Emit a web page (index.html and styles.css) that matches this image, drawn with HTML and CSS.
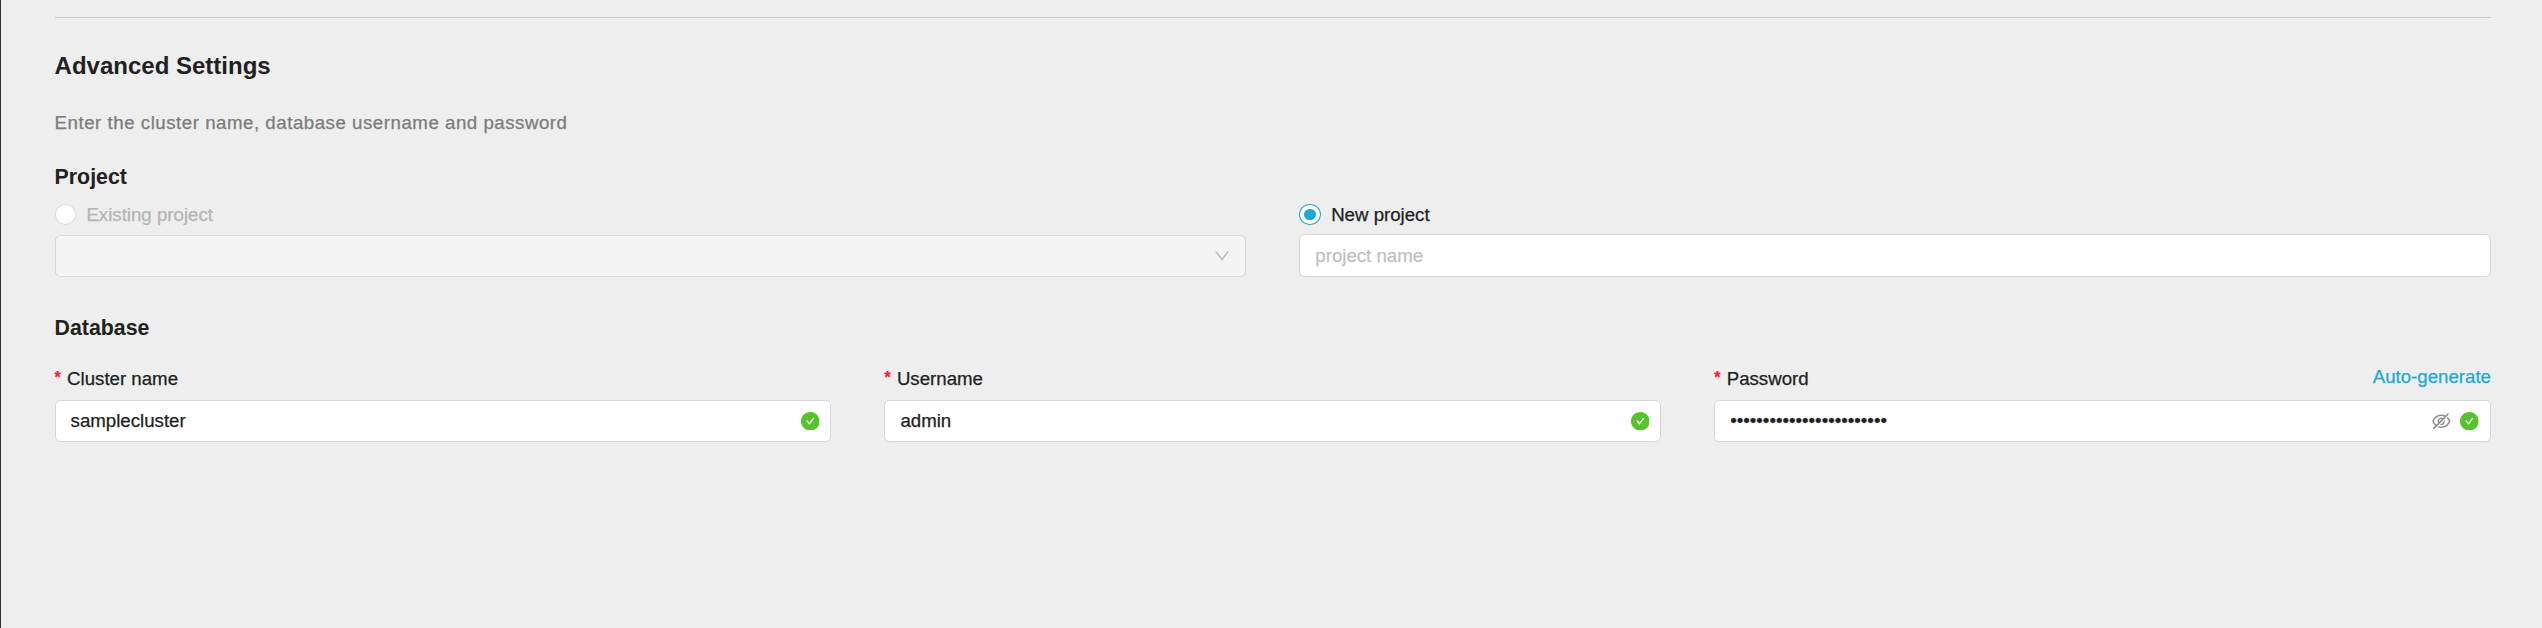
FILE: index.html
```
<!DOCTYPE html>
<html lang="en">
<head>
<meta charset="utf-8">
<title>Advanced Settings</title>
<link rel="stylesheet" href="styles.css">
</head>
<body>
<svg width="0" height="0" class="defs" aria-hidden="true">
  <symbol id="check" viewBox="64 64 896 896"><path d="M512 64C264.6 64 64 264.6 64 512s200.6 448 448 448 448-200.6 448-448S759.4 64 512 64zm193.5 301.7l-210.6 292a31.8 31.8 0 0 1-51.7 0L318.5 484.9c-3.8-5.3 0-12.7 6.5-12.7h46.9c10.2 0 19.9 4.9 25.9 13.3l71.2 98.8 157.2-218c6-8.3 15.6-13.3 25.9-13.3H699c6.5 0 10.3 7.4 6.5 12.7z"/></symbol>
</svg>
<main class="page">
  <hr class="divider">
  <h2 class="title">Advanced Settings</h2>
  <p class="description">Enter the cluster name, database username and password</p>

  <h3 class="section-title">Project</h3>
  <div class="columns project">
    <div class="option">
      <div class="radio-row disabled"><span class="radio"></span>Existing project</div>
      <div class="field select">
        <svg class="icon-down" viewBox="64 64 896 896"><path d="M884 256h-75c-5.1 0-9.9 2.5-12.9 6.6L512 654.2 227.9 262.6c-3-4.1-7.8-6.6-12.9-6.6h-75c-6.5 0-10.3 7.4-6.5 12.7l352.6 486.1c12.8 17.6 39 17.6 51.7 0l352.6-486.1c3.9-5.3.1-12.7-6.4-12.7z"/></svg>
      </div>
    </div>
    <div class="option">
      <div class="radio-row"><span class="radio checked"></span>New project</div>
      <div class="field project-name"><span class="placeholder">project name</span></div>
    </div>
  </div>

  <h3 class="section-title database-title">Database</h3>
  <div class="columns database">
    <div>
      <div class="label"><span class="required">*</span>Cluster name</div>
      <div class="field"><span class="value">samplecluster</span><svg class="icon-check"><use href="#check"/></svg></div>
    </div>
    <div>
      <div class="label"><span class="required">*</span>Username</div>
      <div class="field"><span class="value">admin</span><svg class="icon-check"><use href="#check"/></svg></div>
    </div>
    <div>
      <div class="label"><span class="required">*</span>Password<a class="generate">Auto-generate</a></div>
      <div class="field"><span class="value">••••••••••••••••••••••••</span>
        <svg class="icon-eye" viewBox="64 64 896 896"><path d="M942.2 486.2Q889.47 375.11 816.7 305l-50.88 50.88C807.31 395.53 843.45 447.4 874.7 512 791.5 684.2 673.4 766 512 766q-72.67 0-133.87-22.38L323 798.75Q408 838 512 838q288.3 0 430.2-300.3a60.29 60.29 0 000-51.5zm-63.57-320.64L836 122.88a8 8 0 00-11.32 0L715.31 232.2Q624.86 186 512 186q-288.3 0-430.2 300.3a60.3 60.3 0 000 51.5q56.69 119.4 136.5 191.41L112.48 835a8 8 0 000 11.31L155.17 889a8 8 0 0011.31 0l712.15-712.12a8 8 0 000-11.32zM149.3 512C232.6 339.8 350.7 258 512 258c54.54 0 104.13 9.36 149.12 28.39l-70.3 70.3a176 176 0 00-238.13 238.13l-83.42 83.42C223.1 637.49 183.3 582.28 149.3 512zm246.7 0a112.11 112.11 0 01146.2-106.69L401.31 546.2A112 112 0 01396 512z"/><path d="M508 624c-3.46 0-6.87-.16-10.25-.47l-52.82 52.82a176.09 176.09 0 00227.42-227.42l-52.82 52.82c.31 3.38.47 6.79.47 10.25a111.94 111.94 0 01-112 112z"/></svg>
        <svg class="icon-check"><use href="#check"/></svg></div>
    </div>
  </div>
</main>
</body>
</html>
```
FILE: styles.css
```
* { box-sizing: border-box; }
body {
  margin: 0;
  background: #eee;
  color: #212121;
  font-family: "Liberation Sans", Arial, sans-serif;
  font-size: 18.67px;
  -webkit-text-stroke: 0.25px currentColor;
}
.defs { position: absolute; }
.page {
  height: 628px;
  padding: 17px 51px 0 53.6px;
  border-left: 1px solid #333;
}
.divider { height: 1px; margin: 0; border: 0; background: #c9c9c9; }
.title { margin: 32px 0 0; font-size: 24px; line-height: 32px; font-weight: 700; }
.description {
  margin: 27px 0 0;
  line-height: 28px;
  letter-spacing: 0.53px;
  color: #7b7b7b;
}
.section-title { margin: 26px 0 0; font-size: 21.33px; line-height: 28px; font-weight: 700; }
.title, .section-title { -webkit-text-stroke: 0; }
.database-title { margin-top: 37px; }
.columns { display: grid; column-gap: 53px; }
.project { grid-template-columns: 1fr 1fr; margin-top: 9px; }
.database { grid-template-columns: repeat(3, 1fr); margin-top: 23px; }
.option { display: flex; flex-direction: column; height: 77px; justify-content: space-between; }
.radio-row { display: flex; align-items: center; gap: 10.5px; height: 29px; line-height: 29px; }
.disabled { color: #b4b4b4; }
.radio {
  display: flex;
  align-items: center;
  justify-content: center;
  width: 21.33px;
  height: 21px;
  border: 1px solid #d9d9d9;
  border-radius: 50%;
  background: #fff;
}
.checked { border-color: #1fa8d1; }
.checked::after { content: ""; width: 11.5px; height: 11.5px; border-radius: 50%; background: #1fa8d1; }
.field {
  display: flex;
  align-items: center;
  height: 42px;
  padding: 0 11px 0 15px;
  border: 1px solid #d6d6d6;
  border-radius: 5.33px;
  background: #fff;
  line-height: 28px;
}
.select { justify-content: flex-end; padding-right: 15.5px; background: #f4f4f4; }
.project-name { height: 43px; }
.placeholder { color: #bfbfbf; }
.value { flex: 1; }
.icon-down { width: 16px; height: 16px; fill: #b8b8b8; }
.icon-check { width: 18.67px; height: 18.67px; fill: #56c22d; }
.icon-eye { width: 18.67px; height: 18.67px; margin-right: 9.3px; fill: #8c8c8c; }
.label { display: flex; height: 35px; line-height: 28px; }
.required { width: 12.5px; color: #f5222d; font-size: 16px; font-weight: 700; line-height: 26px; }
.generate { margin: -2px 0 0 auto; color: #1fa8d1; }
```
